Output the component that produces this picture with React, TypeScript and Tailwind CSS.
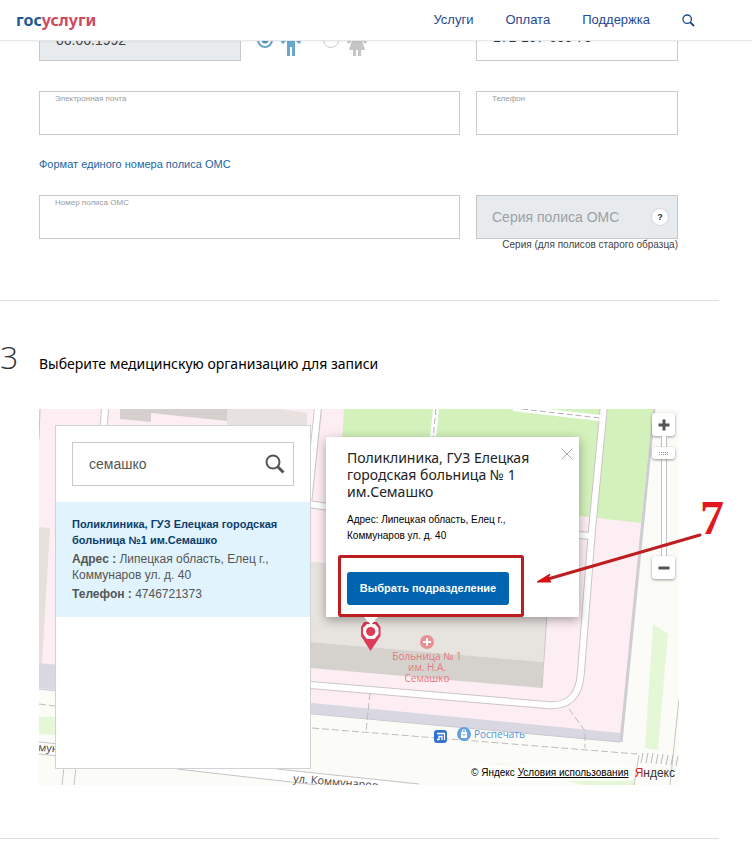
import React from "react";

const navItems = [
  { title: "Услуги", url: "#services" },
  { title: "Оплата", url: "#payment" },
  { title: "Поддержка", url: "#support" },
];

const SearchIcon = ({ className }: { className: string }) => (
  <svg viewBox="0 0 20 20" fill="none" stroke="currentColor" className={className} aria-hidden="true">
    <circle cx="8" cy="8" r="6.5" strokeWidth="2" />
    <path d="M12.5 12.5 L18.5 18.5" strokeWidth="3" />
  </svg>
);

const Header = () => {
  return (
    <header className="sticky top-0 z-20 flex h-[41px] items-center justify-between border-b border-gray-200 bg-white pr-[57px] pl-4 shadow-xs">
      <a href="#home" className="font-['Noto_Sans',sans-serif] text-[16px] leading-5 font-bold text-[#d1495f]">
        <span className="text-[#1b5a94]">гос</span>услуги
      </a>
      <nav className="flex items-center gap-8 text-[13px] text-[#1f4a8f]">
        {navItems.map((item) => (
          <a href={item.url} key={item.title}>
            {item.title}
          </a>
        ))}
        <button type="button" aria-label="Поиск">
          <SearchIcon className="h-[13px] w-[13px]" />
        </button>
      </nav>
    </header>
  );
};

type FieldProps = {
  id: string;
  label: string;
  type?: string;
};

const Field = ({ id, label, type = "text" }: FieldProps) => (
  <div className="flex h-11 flex-col border border-[#c8cacb] bg-white px-[15px] pt-[2px]">
    <label htmlFor={id} className="text-[8px] leading-[10px] text-[#999]">
      {label}
    </label>
    <input id={id} type={type} className="min-h-0 w-full flex-1 text-[14px] outline-none" />
  </div>
);

const PersonalData = () => {
  return (
    <section className="pr-[41px] pl-[39px]">
      <div className="grid grid-cols-[1fr_202px] gap-x-4">
        <div className="flex items-center">
          <input
            aria-label="Дата рождения"
            defaultValue="06.06.1992"
            readOnly
            className="h-[43px] w-[202px] border border-[#c4c8ca] bg-[#e7ebee] px-4 text-[14px] text-[#444]"
          />
          <label className="ml-4 flex items-center gap-2">
            <input
              type="radio"
              name="sex"
              defaultChecked
              aria-label="Мужской"
              className="h-4 w-4 appearance-none rounded-full border-2 border-[#6ba3cb] bg-[radial-gradient(circle,#4f93c4_3px,transparent_4px)]"
            />
            <svg viewBox="0 0 20 36" className="h-9 w-5" fill="#6aa6cc" aria-hidden="true">
              <circle cx="10" cy="5" r="4" />
              <path d="M4 11 H16 L20 20 L18 22 L14 18 V34 H11 V25 H9 V34 H6 V18 L2 22 L0 20 Z" />
            </svg>
          </label>
          <label className="ml-[22px] flex items-center gap-2">
            <input
              type="radio"
              name="sex"
              aria-label="Женский"
              className="h-4 w-4 appearance-none rounded-full border border-[#ccc]"
            />
            <svg viewBox="0 0 20 36" className="h-9 w-5" fill="#c6c6c6" aria-hidden="true">
              <circle cx="10" cy="5" r="4" />
              <path d="M5 11 H15 L20 20 L18 22 L15 18 L18 28 H14 V34 H11 V28 H9 V34 H6 V28 H2 L5 18 L2 22 L0 20 Z" />
            </svg>
          </label>
        </div>
        <input
          aria-label="СНИЛС"
          defaultValue="171-107-600 75"
          className="h-[43px] w-full border border-[#c8cacb] px-4 pb-[6px] text-[14px] text-[#333]"
        />
      </div>

      <div className="mt-[30px] grid grid-cols-[1fr_202px] gap-x-4">
        <Field id="email" label="Электронная почта" type="email" />
        <Field id="phone" label="Телефон" type="tel" />
      </div>

      <a href="#format" className="mt-[21px] block text-[11px] leading-4 text-[#1a66a5]">
        Формат единого номера полиса ОМС
      </a>

      <div className="mt-[23px] grid grid-cols-[1fr_202px] items-start gap-x-4">
        <Field id="policy" label="Номер полиса ОМС" />
        <div>
          <div className="flex h-11 items-center justify-between border border-[#c4c8ca] bg-[#e7ebee] pr-2 pl-[15px]">
            <input
              disabled
              aria-label="Серия полиса ОМС"
              placeholder="Серия полиса ОМС"
              className="w-36 text-[14px] placeholder:text-[#9ba1a5]"
            />
            <button
              type="button"
              aria-label="Подсказка"
              className="h-[18px] w-[18px] rounded-full border border-gray-300 bg-white text-[9px] leading-4 font-bold text-[#333]"
            >
              ?
            </button>
          </div>
          <p className="text-right text-[10px] leading-3 whitespace-nowrap text-[#444]">Серия (для полисов старого образца)</p>
        </div>
      </div>
    </section>
  );
};

const MapDrawing = () => (
  <svg
    viewBox="0 0 640 376"
    preserveAspectRatio="xMinYMin slice"
    className="absolute inset-0 h-full w-full font-['Open_Sans',sans-serif]"
    aria-hidden="true"
  >
    <rect width="640" height="376" fill="#fbfcf7" />
    <path d="M0 0 H614 L582 333 L0 281 Z" fill="#fdeef4" />
    <path d="M0 254 L20 256 L200 287 L273 294 L581 324 L581 333 L0 279 Z" fill="#d9d7e1" />
    <path d="M0 280 L581 333" stroke="#c9c7cf" />
    <path d="M615 0 L582 333" stroke="#cfccd2" strokeWidth="3" />

    {/* lawns */}
    <path d="M305 0 H614 L602 114 L541 107 L300 80 Z" fill="#d3f1bb" />
    <path d="M614 215 L629 225 L619 341 L606 339 Z M0 308 H20 V326 L0 325 Z" fill="#e5f7d7" />
    <path d="M453 354 L596 372 V376 H545 Z" fill="#e5f7d7" />

    {/* buildings */}
    <path d="M81 0 H188 V12 L112 4 V13 L81 10 Z" fill="#d5d0cd" />
    <path d="M188 0 H241 L268 4 V20 H188 Z" fill="#e7e2df" />
    <path d="M0 118 L11 119 L3 254 H0 Z" fill="#e6e0dc" />
    <path d="M260 152 L512 170 L504 253 L260 232 Z" fill="#e7e3df" />
    <path d="M260 232 L504 253 L503 279 L260 258 Z" fill="#d5d1cd" />
    <path d="M508 205 L503 279" stroke="#cbc6c4" />

    {/* driveways: outline first, then the white fill */}
    <g fill="none" stroke="#cbc5c9" strokeWidth="8">
      <path d="M66 0 L63 40" />
      <path d="M279 0 L269 95 L290 98" />
      <path d="M540 126 L553 127" />
      <path d="M565 -4 L553 121 L542 263 Q540 299 508 296 L260 275" />
    </g>
    <g fill="none" stroke="#fff" strokeWidth="6">
      <path d="M66 0 L63 40" />
      <path d="M279 -2 L269 95 L290 98" />
      <path d="M538 126 L554 127" />
      <path d="M397 0 L393 40 M474 -1 L561 9" />
      <path d="M565 -4 L553 121 L542 263 Q540 299 508 296 L260 275" />
    </g>
    <path d="M397 0 L393 40 M474 -1 L561 9" stroke="#b5b1b1" strokeDasharray="6 3" />
    <path d="M1 0 L0 30" stroke="#c4c0c0" />

    {/* footpaths */}
    <path
      d="M0 295 L16 297 M273 319 L598 345 M331 284 L327 323 M530 300 L546 322 V339"
      fill="none"
      stroke="#bdbdbd"
      strokeDasharray="7 3"
    />

    {/* streets */}
    <path d="M0 333 L238 360 L380 376 H271 L138 360 L0 345 Z" fill="#fff" />
    <path d="M0 333 L20 335 M0 345 L20 347 M138 360 L278 376 M238 360 L380 375 M25 358 L23 376 M37 358 L35 376" stroke="#c4c4c4" />
    <path d="M600 346 L595 376 M640 290 L631 376" stroke="#c4c4c4" />
    <path
      d="M604 344 L602 354 M609 344 L607 354 M614 344 L612 354 M619 345 L617 355 M624 345 L622 355 M629 346 L627 356 M634 346 L632 356 M639 347 L637 357"
      stroke="#bbb"
    />
    <text x="-1" y="342" fontSize="11" fill="#444" transform="rotate(5 0 342)">
      мун
    </text>
    <text x="254" y="373" fontSize="11" fill="#444" transform="rotate(5 254 373)">
      ул. Коммунаров
    </text>

    {/* places */}
    <circle cx="388" cy="233" r="7" fill="#ea9095" />
    <path d="M388 229 V237 M384 233 H392" stroke="#fff" strokeWidth="2" />
    <g fontSize="10" fill="#e9777f" textAnchor="middle">
      <text x="388" y="251">
        Больница № 1
      </text>
      <text x="388" y="262">им. Н.А.</text>
      <text x="388" y="273">Семашко</text>
    </g>
    <rect x="395" y="321" width="13" height="13" rx="3" fill="#3373cf" />
    <path d="M398 324.5 H405.5 V331 M398 330.5 H400 V327.5 H403 V331" fill="none" stroke="#fff" strokeWidth="1.3" />
    <circle cx="425" cy="325" r="7" fill="#63a2dc" />
    <path d="M422 323 H428 V329 H422 Z" fill="#fff" />
    <path d="M423.5 323 V321 H426.5 V323" fill="none" stroke="#fff" />
    <path d="M423.5 325 Q425 327.5 426.5 325" fill="none" stroke="#63a2dc" />
    <text x="435" y="329" fontSize="10" fill="#5294d6">
      Роспечать
    </text>

    {/* selected place */}
    <path d="M325 213 H338 L341.5 218 V227 L331.5 242 L322 227 V218 Z" fill="#dc3c58" />
    <path d="M328 215 H336 L339.5 219 V225 L335.5 230 H328 L324 225 V219 Z" fill="#fff" />
    <circle cx="331.7" cy="222.5" r="4.6" fill="#dc3c58" />
  </svg>
);

const SearchPanel = () => (
  <div className="absolute top-4 left-4 h-[344px] w-[256px] border border-[#d0d3d5] bg-white">
    <div className="p-4">
      <div className="flex h-11 items-center justify-between border border-[#c8cacb] pr-2 pl-4">
        <input aria-label="Поиск организации" defaultValue="семашко" className="w-40 text-[14px] text-[#555] outline-none" />
        <button type="button" aria-label="Найти" className="text-[#555]">
          <SearchIcon className="h-5 w-5" />
        </button>
      </div>
    </div>
    <div className="bg-[#e1f4fd] px-4 pt-[14px] pb-[15px] text-[12px] leading-4 text-[#555]">
      <h3 className="text-[11px] font-bold text-[#0c3c6c]">Поликлиника, ГУЗ Елецкая городская больница №1 им.Семашко</h3>
      <p className="mt-[3px]">
        <b>Адрес :</b> Липецкая область, Елец г., Коммунаров ул. д. 40
      </p>
      <p className="mt-[3px]">
        <b>Телефон :</b> 4746721373
      </p>
    </div>
  </div>
);

const Popup = () => (
  <div className="absolute top-7 left-[287px] w-[253px] bg-white px-[21px] pt-3 pb-3 shadow-[0_3px_10px_rgba(0,0,0,0.35)]">
    <h3 className="font-['Noto_Sans',sans-serif] text-[14px] leading-[17px] text-[#222]">
      Поликлиника, ГУЗ Елецкая городская больница № 1 им.Семашко
    </h3>
    <p className="mt-3 w-44 text-[10px] leading-4 text-black">Адрес: Липецкая область, Елец г., Коммунаров ул. д. 40</p>
    <button type="button" className="mt-[28px] h-[33px] w-[162px] rounded-[3px] bg-[#0064b1] text-[11px] font-bold text-white">
      Выбрать подразделение
    </button>
    <button type="button" aria-label="Закрыть" className="absolute top-[11px] right-[6px]">
      <svg viewBox="0 0 12 12" className="h-3 w-3" stroke="#aaa" aria-hidden="true">
        <path d="M0.5 0.5 L11.5 11.5 M11.5 0.5 L0.5 11.5" />
      </svg>
    </button>
    <svg viewBox="0 0 14 8" className="absolute top-full left-[38px] h-2 w-[14px]" fill="#fff" aria-hidden="true">
      <path d="M0 0 H14 L7 8 Z" />
    </svg>
  </div>
);

const zoomButton = "flex h-[23px] w-[23px] items-center justify-center rounded-[3px] bg-white shadow-[0_1px_3px_rgba(0,0,0,0.4)]";

const ZoomControl = () => (
  <div className="absolute top-1 right-1 flex flex-col items-center">
    <button type="button" aria-label="Приблизить" className={zoomButton}>
      <svg viewBox="0 0 12 12" className="h-3 w-3" stroke="#555" strokeWidth="3" aria-hidden="true">
        <path d="M6 0.5 V11.5 M0.5 6 H11.5" />
      </svg>
    </button>
    <div className="flex h-[120px] w-[6px] flex-col items-center border-x border-[#c4c4c4] bg-white pt-[11px]">
      <div className="flex h-3 w-[23px] shrink-0 items-center justify-center rounded-[3px] bg-white shadow-[0_1px_3px_rgba(0,0,0,0.4)]">
        <svg viewBox="0 0 9 3" className="h-[3px] w-[9px]" stroke="#999" strokeDasharray="1 1" aria-hidden="true">
          <path d="M0 0.5 H9 M0 2.5 H9" />
        </svg>
      </div>
    </div>
    <button type="button" aria-label="Отдалить" className={zoomButton}>
      <svg viewBox="0 0 12 12" className="h-3 w-3" stroke="#555" strokeWidth="3" aria-hidden="true">
        <path d="M0.5 6 H11.5" />
      </svg>
    </button>
  </div>
);

const Annotation = () => (
  <svg viewBox="0 0 690 376" className="pointer-events-none absolute top-0 left-0 h-[376px] w-[690px]" aria-hidden="true">
    <rect x="300.5" y="147.5" width="183" height="59" rx="1" fill="none" stroke="#be1e20" strokeWidth="3" />
    <path d="M661 126 L509 170" stroke="#be1e20" strokeWidth="3" strokeLinecap="round" />
    <path d="M498 173 L511 165 L509 169 L512 173 Z" fill="#e01010" stroke="#c81416" />
    <text x="661" y="125" fontSize="48" fontWeight="700" fill="#e0191f" className="font-['Liberation_Serif',serif]">
      7
    </text>
  </svg>
);

const ClinicMap = () => {
  return (
    <div className="relative h-[376px]">
      <div className="absolute inset-0 overflow-hidden">
        <MapDrawing />
        <SearchPanel />
        <Popup />
        <ZoomControl />
        <div className="absolute right-1 bottom-1 flex items-center gap-[6px] text-[10px] leading-4 text-black">
          <span className="bg-white/70">
            © Яндекс{" "}
            <a href="#terms" className="underline">
              Условия использования
            </a>
          </span>
          <span className="font-['Liberation_Sans_Narrow','Liberation_Sans',sans-serif] text-[12px] text-[#333]">
            <span className="text-[#e02020]">Я</span>ндекс
          </span>
        </div>
      </div>
      <Annotation />
    </div>
  );
};

const App = () => {
  return (
    <div className="min-h-screen overflow-x-clip bg-white font-['Liberation_Sans',Arial,sans-serif]">
      <Header />
      <main className="-mt-[23px] mr-[33px]">
        <PersonalData />
        <hr className="mt-[49px] border-[#dcdfe0]" />
        <section className="mt-[39px]">
          <div className="flex h-[34px] items-center">
            <span className="w-[39px] font-['Open_Sans',sans-serif] text-[32px] font-light text-[#333]">3</span>
            <h2 className="pt-[14px] font-['Noto_Sans',sans-serif] text-[14px] leading-5 text-black">
              Выберите медицинскую организацию для записи
            </h2>
          </div>
          <div className="mt-[35px] pr-10 pl-[39px]">
            <ClinicMap />
          </div>
        </section>
        <hr className="mt-[53px] border-[#dcdfe0]" />
      </main>
    </div>
  );
};

export default App;
